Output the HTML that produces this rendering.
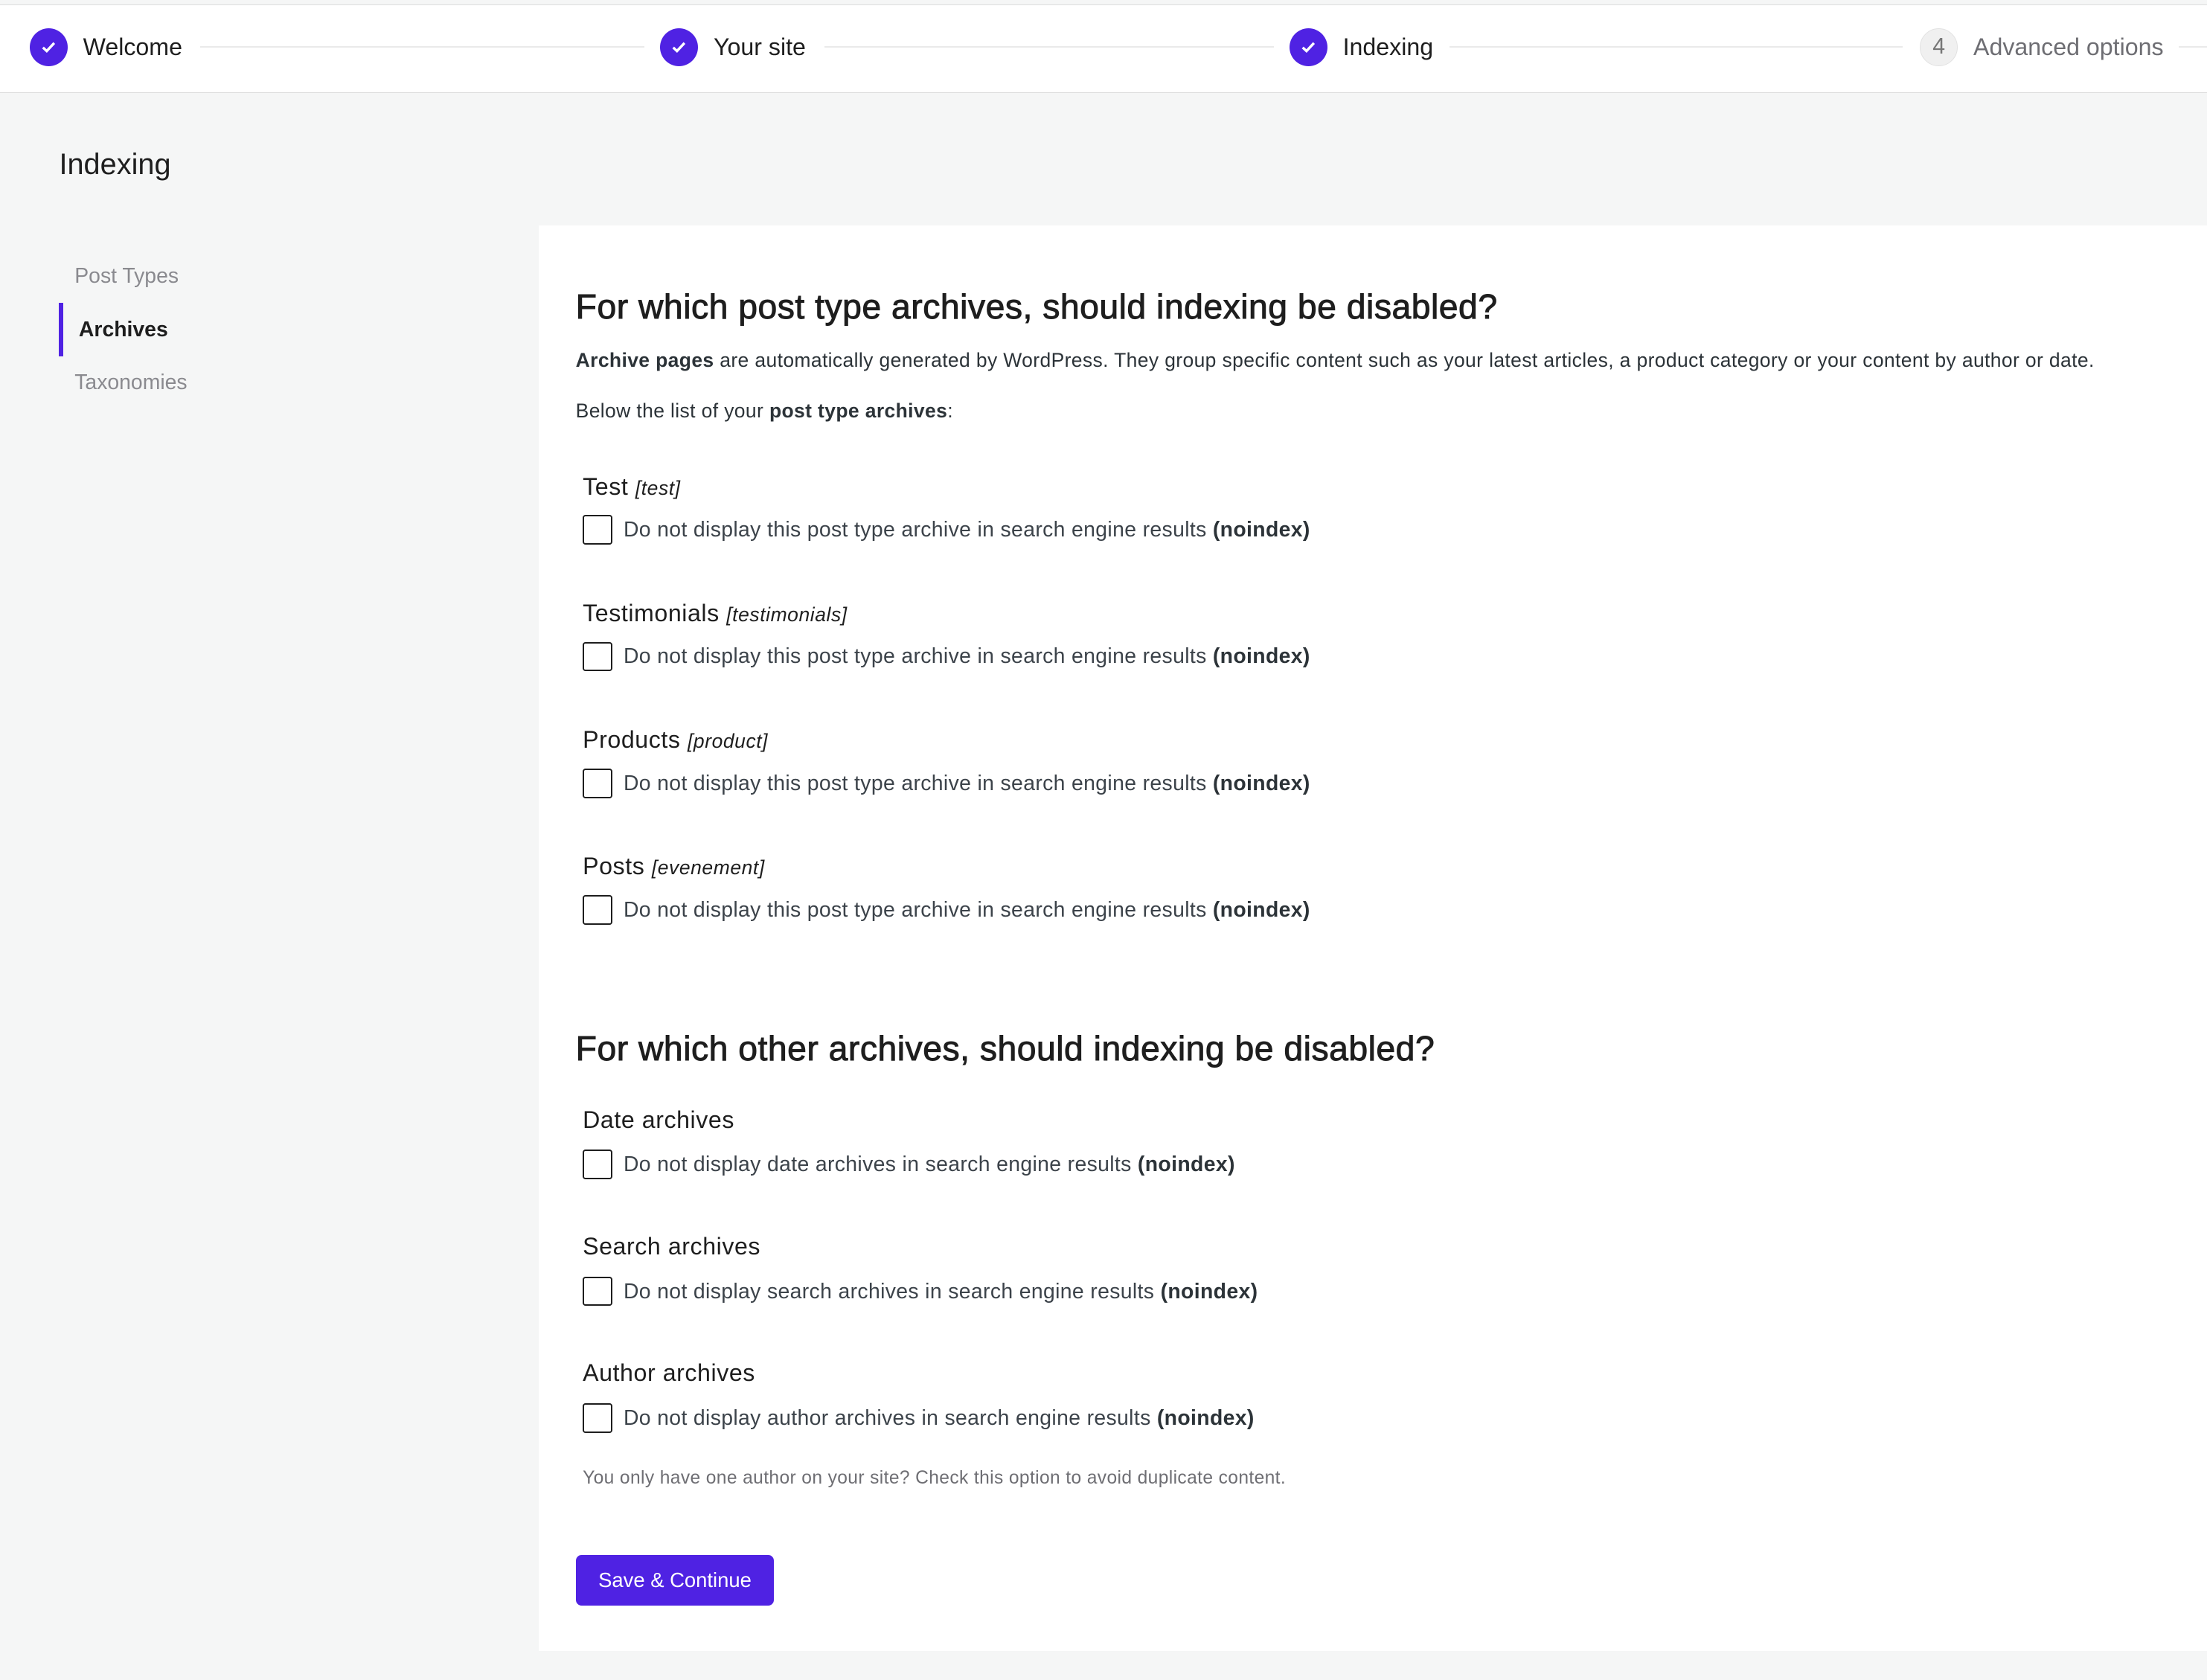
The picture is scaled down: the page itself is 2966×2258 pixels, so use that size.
<!DOCTYPE html>
<html><head><meta charset="utf-8"><style>
*{margin:0;padding:0;box-sizing:border-box}
html,body{width:2966px;height:2258px;overflow:hidden;background:#f5f6f6}
#w{zoom:1.8916;width:1568px;height:1194px;position:relative;font-family:"Liberation Sans",sans-serif;color:#1e1e1e}
.a{position:absolute;white-space:nowrap}
.hdr{position:absolute;left:0;top:3px;width:1568px;height:63px;background:#fff;border-top:1px solid #ddd;border-bottom:1px solid #ddd}
.c{position:absolute;width:27px;height:27px;border-radius:50%;background:#4f22e3;top:20px}
.c svg{position:absolute;left:7px;top:7px}
.ln{position:absolute;top:33px;height:1px;background:#eaeaea}
.st{position:absolute;top:24px;font-size:17px;line-height:20px;color:#1e1e1e}
.panel{position:absolute;left:383px;top:160px;width:1185px;height:1013px;background:#fff}
h2{position:absolute;left:409px;font-size:24.5px;font-weight:normal;line-height:30px;color:#1e1e1e;-webkit-text-stroke:.5px #1e1e1e;white-space:nowrap;letter-spacing:.26px}
.p{position:absolute;left:409px;font-size:14px;line-height:18px;color:#2c3338;white-space:nowrap;letter-spacing:.2px}
.t{position:absolute;left:414px;font-size:17px;line-height:20px;color:#1e1e1e;white-space:nowrap;letter-spacing:.3px}
.t i{font-size:14px}
.cb{position:absolute;left:414px;width:21px;height:21px;border:1.5px solid #1e1e1e;border-radius:2px;background:#fff}
.l{position:absolute;left:443px;font-size:15px;line-height:20px;color:#3c434a;white-space:nowrap;letter-spacing:.19px}
.l b{color:#2c3338}
</style></head><body><div id="w">
<div class="hdr"></div>
<div class="c" style="left:21px"><svg width="13" height="13" viewBox="0 0 13 13"><path d="M2.5 6.8 L5.2 9.3 L10.5 3.6" stroke="#fff" stroke-width="1.8" fill="none"/></svg></div>
<div class="st" style="left:59px">Welcome</div>
<div class="ln" style="left:142px;width:316px"></div>
<div class="c" style="left:469px"><svg width="13" height="13" viewBox="0 0 13 13"><path d="M2.5 6.8 L5.2 9.3 L10.5 3.6" stroke="#fff" stroke-width="1.8" fill="none"/></svg></div>
<div class="st" style="left:507px">Your site</div>
<div class="ln" style="left:586px;width:319px"></div>
<div class="c" style="left:916px"><svg width="13" height="13" viewBox="0 0 13 13"><path d="M2.5 6.8 L5.2 9.3 L10.5 3.6" stroke="#fff" stroke-width="1.8" fill="none"/></svg></div>
<div class="st" style="left:954px">Indexing</div>
<div class="ln" style="left:1030px;width:322px"></div>
<div class="c" style="left:1364px;background:#f0f0f0;border:1px solid #e2e2e2;color:#777;font-size:16px;line-height:25px;text-align:center">4</div>
<div class="st" style="left:1402px;color:#6e6e73">Advanced options</div>
<div class="ln" style="left:1548px;width:20px"></div>

<div class="a" style="left:42px;top:105px;font-size:21px;line-height:24px">Indexing</div>
<div class="a" style="left:53px;top:187px;font-size:15px;line-height:18px;color:#8a8a8f">Post Types</div>
<div class="a" style="left:42px;top:215px;width:3px;height:38px;background:#4f22e3"></div>
<div class="a" style="left:56px;top:225px;font-size:15px;line-height:18px;font-weight:bold;color:#1e1e1e">Archives</div>
<div class="a" style="left:53px;top:263px;font-size:15px;line-height:18px;color:#8a8a8f">Taxonomies</div>

<div class="panel"></div>
<h2 style="top:203px">For which post type archives, should indexing be disabled?</h2>
<div class="p" style="top:247px"><b>Archive pages</b> are automatically generated by WordPress. They group specific content such as your latest articles, a product category or your content by author or date.</div>
<div class="p" style="top:283px">Below the list of your <b>post type archives</b>:</div>

<div class="t" style="top:336px">Test <i>[test]</i></div>
<div class="cb" style="top:366px"></div>
<div class="l" style="top:367px">Do not display this post type archive in search engine results <b>(noindex)</b></div>

<div class="t" style="top:426px">Testimonials <i>[testimonials]</i></div>
<div class="cb" style="top:456px"></div>
<div class="l" style="top:457px">Do not display this post type archive in search engine results <b>(noindex)</b></div>

<div class="t" style="top:516px">Products <i>[product]</i></div>
<div class="cb" style="top:546px"></div>
<div class="l" style="top:547px">Do not display this post type archive in search engine results <b>(noindex)</b></div>

<div class="t" style="top:606px">Posts <i>[evenement]</i></div>
<div class="cb" style="top:636px"></div>
<div class="l" style="top:637px">Do not display this post type archive in search engine results <b>(noindex)</b></div>

<h2 style="top:730px">For which other archives, should indexing be disabled?</h2>

<div class="t" style="top:786px">Date archives</div>
<div class="cb" style="top:817px"></div>
<div class="l" style="top:818px">Do not display date archives in search engine results <b>(noindex)</b></div>

<div class="t" style="top:876px">Search archives</div>
<div class="cb" style="top:907px"></div>
<div class="l" style="top:908px">Do not display search archives in search engine results <b>(noindex)</b></div>

<div class="t" style="top:966px">Author archives</div>
<div class="cb" style="top:997px"></div>
<div class="l" style="top:998px">Do not display author archives in search engine results <b>(noindex)</b></div>

<div class="a" style="left:414px;top:1042px;font-size:13px;line-height:17px;color:#6e6e73;letter-spacing:.2px">You only have one author on your site? Check this option to avoid duplicate content.</div>

<div class="a" style="left:409px;top:1105px;width:141px;height:36px;background:#4f22e3;border-radius:4px;color:#fff;font-size:14.5px;line-height:36px;text-align:center">Save &amp; Continue</div>
</div></body></html>
